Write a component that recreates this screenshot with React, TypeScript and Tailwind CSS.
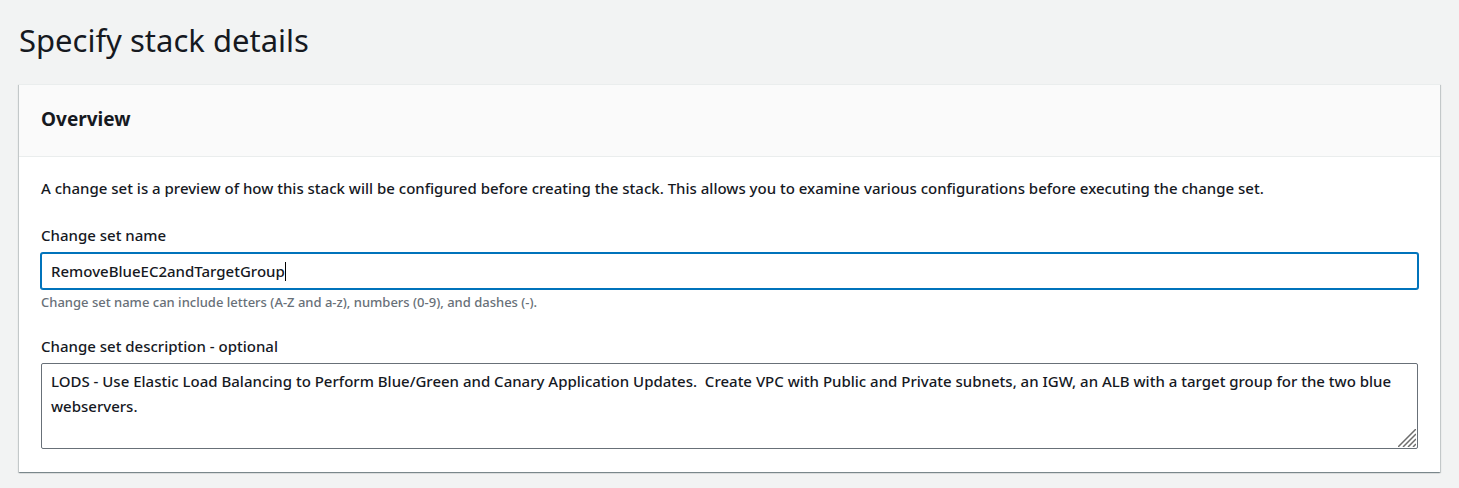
import { useState } from "react";

function ResizeGrip() {
  return (
    <svg
      aria-hidden="true"
      viewBox="0 0 18 18"
      className="pointer-events-none absolute right-[2px] bottom-[2px] size-[18px]"
      fill="none"
      stroke="#6d6d6d"
      strokeWidth="1.5"
    >
      <path d="M0 18 18 0M5 18 18 5M10 18 18 10M15 18 18 15" />
    </svg>
  );
}

export default function App() {
  const [name, setName] = useState("RemoveBlueEC2andTargetGroup");
  const [description, setDescription] = useState(
    "LODS - Use Elastic Load Balancing to Perform Blue/Green and Canary Application Updates.  Create VPC with Public and Private subnets, an IGW, an ALB with a target group for the two blue webservers."
  );

  return (
    <main className="min-h-screen bg-[#f2f3f3] px-[19px] pt-5 pb-4 font-['Noto_Sans',sans-serif] text-[15px] leading-6 font-medium text-[#16191f]">
      <h1 className="text-[31px] leading-10 font-normal">Specify stack details</h1>
      <section className="mt-6 border-t border-[#eaeded] bg-white shadow-[0_1px_1px_0_rgba(0,28,36,0.3),1px_1px_1px_0_rgba(0,28,36,0.15),-1px_1px_1px_0_rgba(0,28,36,0.15)]">
        <header className="border-b border-[#eaeded] bg-[#fafafa] px-[22px] pt-[18px] pb-[21px]">
          <h2 className="text-[19px] leading-8 font-bold">Overview</h2>
        </header>
        <div className="px-[22px] pt-[19px] pb-[23px]">
          <p>
            A change set is a preview of how this stack will be configured before creating the stack. This allows you to examine various configurations before executing the change set.
          </p>
          <div className="mt-[23px]">
            <label htmlFor="name" className="block">Change set name</label>
            <div className="mt-[6px] flex h-9 items-center rounded-xs border border-[#0073bb] bg-white px-[9px] ring-1 ring-[#0073bb]">
              <input
                id="name"
                value={name}
                onChange={(e) => setName(e.target.value)}
                className="max-w-full field-sizing-content bg-transparent pb-px caret-transparent outline-none"
              />
              <span aria-hidden="true" className="h-[19px] w-px bg-black" />
            </div>
            <p className="mt-px text-[13px] text-[#687078]">
              Change set name can include letters (A-Z and a-z), numbers (0-9), and dashes (-).
            </p>
          </div>
          <div className="mt-5">
            <label htmlFor="description" className="block">Change set description - optional</label>
            <div className="relative mt-[5px]">
              <textarea
                id="description"
                value={description}
                onChange={(e) => setDescription(e.target.value)}
                className="block h-[86px] w-full resize-none rounded-xs border border-[#687078] bg-white px-[9px] py-[5px] leading-[25px] outline-none"
              />
              <ResizeGrip />
            </div>
          </div>
        </div>
      </section>
    </main>
  );
}
